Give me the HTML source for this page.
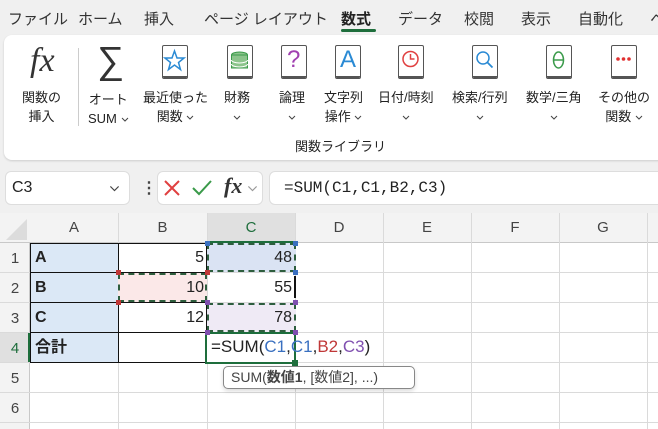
<!DOCTYPE html><html><head><meta charset="utf-8"><style>
*{margin:0;padding:0;box-sizing:border-box}
body{width:658px;height:429px;overflow:hidden;background:#f0f0f0;font-family:"Liberation Sans","Noto Sans CJK JP",sans-serif;position:relative;color:#222}
.a{position:absolute}
.tab{position:absolute;top:8px;font-size:15px;color:#333}
.lbl{position:absolute;font-size:13px;text-align:center;line-height:19px;color:#222;white-space:nowrap}
.book{position:absolute;top:45px;width:26px;height:34px;border:1.5px solid #555;border-radius:2px;background:#fff;box-shadow:inset 0 -5px 0 -3px #555}
.cell{position:absolute;height:30px;font-size:16px;line-height:30px}
.vl{position:absolute;width:1px;background:#dadada}
.hl{position:absolute;height:1px;background:#dadada}
.cv{display:inline-block;width:8px;height:5px;vertical-align:middle}
</style></head><body>
<svg width="0" height="0" style="position:absolute"><defs><symbol id="chev" viewBox="0 0 8 5"><path d="M1 1l3 3 3-3" fill="none" stroke="#444" stroke-width="1"/></symbol></defs></svg>
<!-- tabs -->
<div class="tab" style="left:8px">ファイル</div>
<div class="tab" style="left:78px">ホーム</div>
<div class="tab" style="left:144px">挿入</div>
<div class="tab" style="left:204px">ページ レイアウト</div>
<div class="tab" style="left:341px;font-weight:bold;color:#222">数式</div>
<div class="a" style="left:341px;top:29px;width:35px;height:3px;background:#1e6e3c;border-radius:2px"></div>
<div class="tab" style="left:398px">データ</div>
<div class="tab" style="left:464px">校閲</div>
<div class="tab" style="left:521px">表示</div>
<div class="tab" style="left:578px">自動化</div>
<div class="tab" style="left:650px">ヘ</div>
<!-- ribbon -->
<div class="a" style="left:4px;top:35px;width:670px;height:125px;background:#fff;border-radius:8px;box-shadow:0 1px 2px rgba(0,0,0,.15)"></div>
<div class="a" style="left:30px;top:42px;font-family:'Liberation Serif',serif;font-style:italic;font-size:34px;color:#333">fx</div>
<div class="lbl" style="left:22px;top:88px">関数の<br>挿入</div>
<div class="a" style="left:78px;top:48px;width:1px;height:78px;background:#ccc"></div>
<div class="a" style="left:97px;top:40px;font-size:38px;color:#333;font-weight:lighter">∑</div>
<div class="lbl" style="left:88px;top:90px">オート<br>SUM <svg class="cv"><use href="#chev"/></svg></div>
<div class="book" style="left:162px"><svg width="23" height="26" style="position:absolute;left:0;top:2px"><polygon points="11.5,3 14,10 21,10 15.5,14.5 17.5,21.5 11.5,17 5.5,21.5 7.5,14.5 2,10 9,10" fill="none" stroke="#2a8ad4" stroke-width="1.5"/></svg></div>
<div class="lbl" style="left:143px;top:88px">最近使った<br>関数 <svg class="cv"><use href="#chev"/></svg></div>
<div class="book" style="left:227px"><svg width="23" height="28" style="position:absolute;left:0;top:2px"><ellipse cx="11.5" cy="7" rx="8" ry="3" fill="#8cc48c" stroke="#3a9a4a"/><rect x="3.5" y="7" width="16" height="13" fill="#8cc48c" stroke="#3a9a4a"/><path d="M3.5 12a8 3 0 0 0 16 0M3.5 16a8 3 0 0 0 16 0" fill="none" stroke="#fff"/></svg></div>
<div class="lbl" style="left:224px;top:88px">財務<br><svg class="cv"><use href="#chev"/></svg></div>
<div class="book" style="left:281px"><div class="a" style="left:5px;top:0px;font-size:24px;color:#a040b0">?</div></div>
<div class="lbl" style="left:279px;top:88px">論理<br><svg class="cv"><use href="#chev"/></svg></div>
<div class="book" style="left:335px"><div class="a" style="left:4px;top:0px;font-size:24px;color:#2a8ad4">A</div></div>
<div class="lbl" style="left:324px;top:88px">文字列<br>操作 <svg class="cv"><use href="#chev"/></svg></div>
<div class="book" style="left:398px"><svg width="23" height="26" style="position:absolute;left:0;top:2px"><circle cx="11.5" cy="11" r="7.5" fill="none" stroke="#e04040" stroke-width="1.5"/><path d="M11.5 6v5h4" fill="none" stroke="#e04040" stroke-width="1.5"/></svg></div>
<div class="lbl" style="left:378px;top:88px">日付/時刻<br><svg class="cv"><use href="#chev"/></svg></div>
<div class="book" style="left:472px"><svg width="23" height="26" style="position:absolute;left:0;top:2px"><circle cx="10" cy="10" r="6" fill="none" stroke="#2a8ad4" stroke-width="1.5"/><path d="M14.5 14.5l5 5" stroke="#2a8ad4" stroke-width="1.8"/></svg></div>
<div class="lbl" style="left:452px;top:88px">検索/行列<br><svg class="cv"><use href="#chev"/></svg></div>
<div class="book" style="left:546px"><svg width="23" height="26" style="position:absolute;left:0;top:2px"><ellipse cx="11.5" cy="12" rx="5" ry="8" fill="none" stroke="#3a9a4a" stroke-width="1.5"/><path d="M6.5 12h10" stroke="#3a9a4a" stroke-width="1.5"/></svg></div>
<div class="lbl" style="left:526px;top:88px">数学/三角<br><svg class="cv"><use href="#chev"/></svg></div>
<div class="book" style="left:611px"><svg width="23" height="26" style="position:absolute;left:0;top:2px"><circle cx="6" cy="11" r="1.8" fill="#e03030"/><circle cx="11.5" cy="11" r="1.8" fill="#e03030"/><circle cx="17" cy="11" r="1.8" fill="#e03030"/></svg></div>
<div class="lbl" style="left:598px;top:88px">その他の<br>関数 <svg class="cv"><use href="#chev"/></svg></div>
<div class="lbl" style="left:295px;top:137px">関数ライブラリ</div>
<!-- formula bar -->
<div class="a" style="left:5px;top:171px;width:125px;height:34px;background:#fff;border:1px solid #ddd;border-radius:6px;font-size:16px;line-height:32px;padding-left:6px">C3<svg style="position:absolute;right:9px;top:13px;width:11px;height:7px" viewBox="0 0 8 5"><path d="M1 1l3 3 3-3" fill="none" stroke="#444" stroke-width=".8"/></svg></div>
<div class="a" style="left:141px;top:178px;font-size:16px;font-weight:bold;color:#444">⋮</div>
<div class="a" style="left:157px;top:171px;width:106px;height:34px;background:#fff;border:1px solid #ddd;border-radius:6px"></div>
<svg class="a" style="left:162px;top:178px" width="20" height="20"><path d="M3 3l14 14M17 3L3 17" stroke="#e04040" stroke-width="2"/></svg>
<svg class="a" style="left:190px;top:178px" width="24" height="20"><path d="M3 10l6 6 12-13" fill="none" stroke="#3a9a4a" stroke-width="2"/></svg>
<div class="a" style="left:224px;top:173px;font-family:'Liberation Serif',serif;font-style:italic;font-size:22px;font-weight:bold;color:#333">fx</div>
<svg class="a" style="left:247px;top:185px;width:11px;height:7px" viewBox="0 0 8 5"><path d="M1 1l3 3 3-3" fill="none" stroke="#999" stroke-width=".8"/></svg>
<div class="a" style="left:269px;top:171px;width:400px;height:34px;background:#fff;border:1px solid #ddd;border-radius:6px;font-family:'Liberation Mono',monospace;font-size:16px;line-height:32px;padding-left:14px">=SUM(C1,C1,B2,C3)</div>
<!-- grid -->
<div class="a" style="left:0;top:213px;width:658px;height:216px;background:#fff"></div>
<div class="a" style="left:0;top:213px;width:658px;height:30px;background:#f3f3f3;border-bottom:1px solid #c8c8c8"></div>
<div class="a" style="left:0;top:243px;width:30px;height:186px;background:#f3f3f3;border-right:1px solid #c8c8c8"></div>
<svg class="a" style="left:6px;top:219px" width="22" height="22"><polygon points="21,0 21,21 0,21" fill="#dcdcdc"/></svg>
<div class="a" style="left:207px;top:213px;width:88px;height:30px;background:#e0e0e0;border-bottom:2px solid #1e6e3c"></div>
<div class="a" style="left:0;top:332px;width:30px;height:30px;background:#e0e0e0;border-right:2px solid #1e6e3c"></div>
<div class="a" style="left:30px;top:219px;width:88px;text-align:center;font-size:15px;color:#444">A</div>
<div class="a" style="left:118px;top:219px;width:89px;text-align:center;font-size:15px;color:#444">B</div>
<div class="a" style="left:207px;top:219px;width:88px;text-align:center;font-size:15px;color:#1e6e3c">C</div>
<div class="a" style="left:295px;top:219px;width:88px;text-align:center;font-size:15px;color:#444">D</div>
<div class="a" style="left:383px;top:219px;width:88px;text-align:center;font-size:15px;color:#444">E</div>
<div class="a" style="left:471px;top:219px;width:88px;text-align:center;font-size:15px;color:#444">F</div>
<div class="a" style="left:559px;top:219px;width:88px;text-align:center;font-size:15px;color:#444">G</div>
<div class="vl" style="left:118px;top:213px;height:216px"></div>
<div class="vl" style="left:207px;top:213px;height:216px"></div>
<div class="vl" style="left:295px;top:213px;height:216px"></div>
<div class="vl" style="left:383px;top:213px;height:216px"></div>
<div class="vl" style="left:471px;top:213px;height:216px"></div>
<div class="vl" style="left:559px;top:213px;height:216px"></div>
<div class="vl" style="left:647px;top:213px;height:216px"></div>
<div class="hl" style="left:0;top:272px;width:658px"></div>
<div class="hl" style="left:0;top:302px;width:658px"></div>
<div class="hl" style="left:0;top:332px;width:658px"></div>
<div class="hl" style="left:0;top:362px;width:658px"></div>
<div class="hl" style="left:0;top:392px;width:658px"></div>
<div class="hl" style="left:0;top:422px;width:658px"></div>
<div class="a" style="left:0;top:250px;width:30px;font-size:15px;color:#444;text-align:center">1</div>
<div class="a" style="left:0;top:280px;width:30px;font-size:15px;color:#444;text-align:center">2</div>
<div class="a" style="left:0;top:310px;width:30px;font-size:15px;color:#444;text-align:center">3</div>
<div class="a" style="left:0;top:340px;width:30px;font-size:15px;color:#1e6e3c;text-align:center">4</div>
<div class="a" style="left:0;top:370px;width:30px;font-size:15px;color:#444;text-align:center">5</div>
<div class="a" style="left:0;top:400px;width:30px;font-size:15px;color:#444;text-align:center">6</div>
<!-- table -->
<div class="a" style="left:30px;top:243px;width:89px;height:120px;background:#dbe8f6"></div>
<div class="a" style="left:30px;top:243px;width:177px;height:1px;background:#111"></div>
<div class="a" style="left:30px;top:272px;width:177px;height:1px;background:#111"></div>
<div class="a" style="left:30px;top:302px;width:177px;height:1px;background:#111"></div>
<div class="a" style="left:30px;top:332px;width:177px;height:1px;background:#111"></div>
<div class="a" style="left:30px;top:362px;width:177px;height:1px;background:#111"></div>
<div class="a" style="left:30px;top:243px;width:1px;height:120px;background:#111"></div>
<div class="a" style="left:118px;top:243px;width:1px;height:120px;background:#111"></div>
<div class="a" style="left:206px;top:243px;width:1px;height:120px;background:#111"></div>
<div class="cell" style="left:35px;top:243px;font-weight:bold">A</div>
<div class="cell" style="left:35px;top:273px;font-weight:bold">B</div>
<div class="cell" style="left:35px;top:303px;font-weight:bold">C</div>
<div class="cell" style="left:35px;top:333px;font-weight:bold">合計</div>
<div class="cell" style="left:118px;top:243px;width:86px;text-align:right">5</div>
<div class="a" style="left:118px;top:273px;width:89px;height:29px;background:#fbe8e8;border:2px dashed #2e5e3e"></div>
<div class="cell" style="left:118px;top:273px;width:86px;text-align:right">10</div>
<div class="cell" style="left:118px;top:303px;width:86px;text-align:right">12</div>
<div class="a" style="left:207px;top:243px;width:89px;height:29px;background:#dae3f3;border:2px dashed #2e5e3e"></div>
<div class="cell" style="left:207px;top:243px;width:85px;text-align:right">48</div>
<div class="cell" style="left:207px;top:273px;width:85px;text-align:right">55</div>
<div class="a" style="left:294px;top:276px;width:1.5px;height:22px;background:#111"></div>
<div class="a" style="left:207px;top:303px;width:89px;height:29px;background:#efeaf5;border:2px dashed #2e5e3e"></div>
<div class="cell" style="left:207px;top:303px;width:85px;text-align:right">78</div>
<div class="a" style="left:205px;top:332px;width:91px;height:32px;background:#fff;border:2px solid #1e6e3c"></div>
<div class="cell" style="left:211px;top:332px;font-size:17px;white-space:nowrap">=SUM(<span style="color:#3a70c0">C1</span>,<span style="color:#3a70c0">C1</span>,<span style="color:#c03838">B2</span>,<span style="color:#8050b0">C3</span>)</div>
<!-- handles -->
<div class="a" style="left:205px;top:241px;width:5px;height:5px;background:#3a70c0"></div>
<div class="a" style="left:293px;top:241px;width:5px;height:5px;background:#3a70c0"></div>
<div class="a" style="left:293px;top:270px;width:5px;height:5px;background:#3a70c0"></div>
<div class="a" style="left:116px;top:270px;width:5px;height:5px;background:#c03838"></div>
<div class="a" style="left:205px;top:270px;width:5px;height:5px;background:#c03838"></div>
<div class="a" style="left:116px;top:300px;width:5px;height:5px;background:#c03838"></div>
<div class="a" style="left:205px;top:300px;width:5px;height:5px;background:#8050b0"></div>
<div class="a" style="left:293px;top:300px;width:5px;height:5px;background:#8050b0"></div>
<div class="a" style="left:205px;top:330px;width:5px;height:5px;background:#8050b0"></div>
<div class="a" style="left:293px;top:330px;width:5px;height:5px;background:#8050b0"></div>
<div class="a" style="left:292px;top:360px;width:6px;height:6px;background:#1e6e3c"></div>
<!-- tooltip -->
<div class="a" style="left:223px;top:366px;width:192px;height:23px;background:#fff;border:1px solid #888;border-radius:5px;box-shadow:0 2px 4px rgba(0,0,0,.15);font-size:14px;line-height:21px;padding-left:7px;color:#444;white-space:nowrap">SUM(<b>数値1</b>, [数値2], ...)</div>
</body></html>
